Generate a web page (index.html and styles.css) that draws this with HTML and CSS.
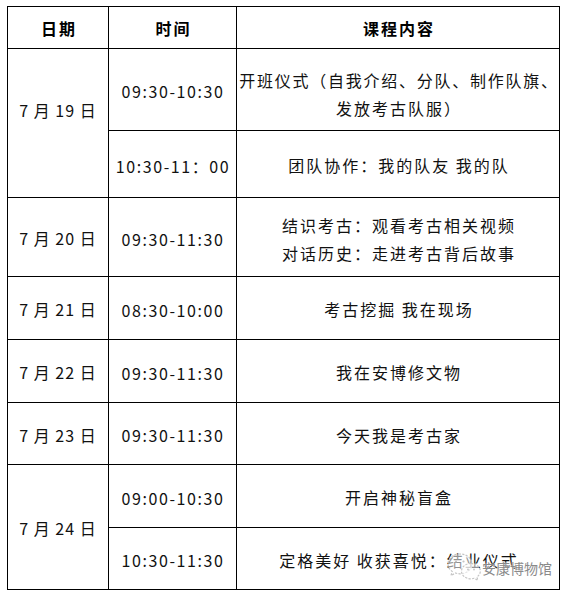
FILE: index.html
```html
<!DOCTYPE html>
<html lang="zh-CN">
<head>
<meta charset="utf-8">
<title>课程安排</title>
<link rel="stylesheet" href="styles.css">
</head>
<body>
<div class="page">
  <div class="schedule">
    <div class="cell head">日期</div>
    <div class="cell head">时间</div>
    <div class="cell head">课程内容</div>

    <div class="cell date span2 date-first">7 月 19 日</div>
    <div class="cell time">09:30-10:30</div>
    <div class="cell content shift-9"><span class="nowrap">开班仪式（自我介绍、分队、制作队旗、</span><br><span>发放考古队服）</span></div>
    <div class="cell time">10:30-11：00</div>
    <div class="cell content">团队协作：我的队友 我的队</div>

    <div class="cell date">7 月 20 日</div>
    <div class="cell time">09:30-11:30</div>
    <div class="cell content shift-4">结识考古：观看考古相关视频<br>对话历史：走进考古背后故事</div>

    <div class="cell date">7 月 21 日</div>
    <div class="cell time">08:30-10:00</div>
    <div class="cell content">考古挖掘 我在现场</div>

    <div class="cell date">7 月 22 日</div>
    <div class="cell time">09:30-11:30</div>
    <div class="cell content">我在安博修文物</div>

    <div class="cell date">7 月 23 日</div>
    <div class="cell time">09:30-11:30</div>
    <div class="cell content">今天我是考古家</div>

    <div class="cell date span2">7 月 24 日</div>
    <div class="cell time">09:00-10:30</div>
    <div class="cell content">开启神秘盲盒</div>
    <div class="cell time">10:30-11:30</div>
    <div class="cell content">定格美好 收获喜悦：结业仪式</div>
  </div>

  <div class="watermark">
    <svg class="wm-icon" width="38" height="30" viewBox="0 0 38 30">
      <path d="M14 3 C7 3 2 7.5 2 13 C2 16 3.6 18.6 6.2 20.4 L5 24.5 L9.6 22 C11 22.5 12.5 22.8 14 22.8 C21 22.8 26 18.3 26 13 C26 7.5 21 3 14 3 Z" fill="rgba(255,255,255,0.55)" stroke="#c4c4c4" stroke-width="1.2" stroke-dasharray="2.2 1.3"/>
      <path d="M25 12.5 C19.5 12.5 15.5 16 15.5 20.2 C15.5 24.4 19.5 27.8 25 27.8 C26.1 27.8 27.2 27.6 28.2 27.3 L31.8 29.2 L30.9 26 C32.9 24.6 34.3 22.5 34.3 20.2 C34.3 16 30.4 12.5 25 12.5 Z" fill="rgba(255,255,255,0.55)" stroke="#c4c4c4" stroke-width="1.2" stroke-dasharray="2.2 1.3"/>
      <circle cx="10" cy="10.5" r="1.1" fill="#c4c4c4"/>
      <circle cx="17.5" cy="10.5" r="1.1" fill="#c4c4c4"/>
      <circle cx="22" cy="18.5" r="0.9" fill="#c4c4c4"/>
      <circle cx="28" cy="18.5" r="0.9" fill="#c4c4c4"/>
    </svg>
    <span class="wm-text">安康博物馆</span>
  </div>
</div>
</body>
</html>
```

FILE: styles.css
```css
html, body {
  margin: 0;
  padding: 0;
  background: #ffffff;
}

.page {
  position: relative;
  padding: 6px 0 0 7px;
  width: 570px;
  height: 595px;
  box-sizing: border-box;
  font-family: "Noto Sans CJK SC", "Noto Sans", sans-serif;
  color: #111111;
}

.schedule {
  display: grid;
  grid-template-columns: 100px 127px 322px;
  grid-template-rows: 41px 81px 66px 78px 62px 62px 61px 62px 61px;
  gap: 1px;
  padding: 1px;
  background: #000000;
  width: max-content;
}

.cell {
  background: #ffffff;
  display: flex;
  align-items: center;
  justify-content: center;
  text-align: center;
  font-size: 16px;
  line-height: 28px;
  white-space: nowrap;
  overflow: visible;
}

.head {
  font-weight: 700;
  letter-spacing: 2px;
  color: #000000;
  padding-left: 2px;
}

.date {
  letter-spacing: 1px;
  padding-top: 2px;
}

.date-first {
  padding-bottom: 26px;
  padding-top: 0;
}

.span2 {
  grid-row: span 2;
}

.time {
  letter-spacing: 1.6px;
  padding-top: 3px;
  padding-left: 1px;
}

.content {
  letter-spacing: 2px;
  padding-top: 2px;
  padding-left: 2px;
}

.shift-9 {
  padding-top: 9px;
  flex-direction: column;
  line-height: 28px;
}

.shift-9 br {
  display: none;
}

.shift-9 .nowrap {
  letter-spacing: 1.75px;
  margin-left: 0;
}

.shift-4 {
  padding-top: 4px;
}

.watermark {
  position: absolute;
  left: 446px;
  top: 551px;
  display: flex;
  align-items: center;
  gap: 0;
}

.wm-icon {
  display: block;
}

.wm-text {
  font-size: 14px;
  line-height: 16px;
  color: #8a8a8a;
  letter-spacing: 0;
  margin-left: -2px;
  margin-top: 4px;
  text-shadow: 0 0 2px #ffffff, 0 0 1px #ffffff;
}
```
